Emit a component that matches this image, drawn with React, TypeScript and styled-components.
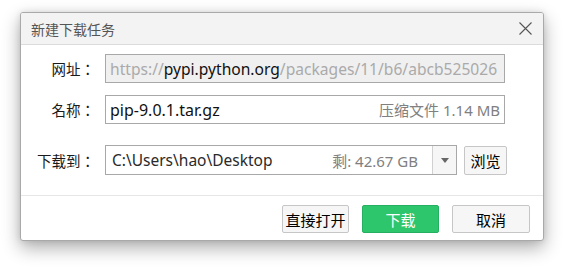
import React from "react";
import styled, { createGlobalStyle } from "styled-components";

const GlobalStyle = createGlobalStyle`
  html, body {
    margin: 0;
    padding: 0;
    background: #fff;
  }
  body {
    font-family: "Segoe UI", "Noto Sans", "Noto Sans CJK SC", sans-serif;
  }
`;

const Page = styled.div`
  width: 565px;
  height: 270px;
  padding: 12px 0 0 20px;
  box-sizing: border-box;
`;

const Dialog = styled.div`
  width: 524px;
  height: 229px;
  box-sizing: border-box;
  border: 1px solid #a9a9a9;
  border-radius: 3px;
  background: #fff;
  box-shadow: 0 7px 18px rgba(0, 0, 0, 0.32), 0 0 6px rgba(0, 0, 0, 0.1);
  display: flex;
  flex-direction: column;
  overflow: hidden;
`;

const TitleBar = styled.div`
  height: 31px;
  flex: none;
  background: #f3f3f3;
  border-bottom: 1px solid #dcdcdc;
  display: flex;
  align-items: center;
  justify-content: space-between;
  padding: 0 10px 0 10px;
`;

const Title = styled.span`
  font-family: "Noto Sans CJK SC", sans-serif;
  font-size: 14px;
  color: #555;
`;

const CloseButton = styled.button`
  width: 16px;
  height: 16px;
  padding: 0;
  border: none;
  background: none;
  display: flex;
  align-items: center;
  justify-content: center;
`;

const Body = styled.div`
  flex: none;
  display: grid;
  grid-template-columns: 76px 1fr;
  column-gap: 8px;
  align-items: center;
  padding: 9px 38px 20px 0;
  border-bottom: 1px solid #e6e6e6;
`;

const Label = styled.label<{ $top?: number }>`
  font-family: "Noto Sans CJK TC", "Noto Sans CJK SC", sans-serif;
  font-size: 14.5px;
  color: #1a1a1a;
  text-align: right;
  margin-top: ${(p) => p.$top ?? 0}px;
  padding-right: 2px;
`;

const Field = styled.div<{ $disabled?: boolean; $top?: number; $h?: number }>`
  height: ${(p) => p.$h ?? 29}px;
  box-sizing: border-box;
  border: 1px solid #a8a8a8;
  background: ${(p) => (p.$disabled ? "#f0f0f0" : "#fff")};
  display: flex;
  align-items: center;
  padding: 0 0 0 4px;
  margin-top: ${(p) => p.$top ?? 0}px;
  font-size: ${(p) => (p.$disabled ? 15.6 : 16)}px;
  white-space: nowrap;
  overflow: hidden;
`;

const Text = styled.span<{ $muted?: boolean }>`
  color: ${(p) => (p.$muted ? "#aaa" : "#111")};
`;

const Aside = styled.span`
  margin-left: auto;
  padding-right: 4px;
  color: #808080;
  font-size: 15px;
`;

const PathRow = styled.div`
  display: flex;
  align-items: center;
  gap: 7px;
  margin-top: 21px;
  margin-right: -2px;
`;

const PathField = styled(Field)`
  flex: 1;
  padding-right: 0;
  font-size: 15.5px;
  color: #2a2a2a;
  padding-left: 6px;
`;

const DropArrow = styled.div`
  width: 23px;
  align-self: stretch;
  border-left: 1px solid #d0d0d0;
  background: #f6f6f6;
  display: flex;
  align-items: center;
  justify-content: center;
  margin-left: 10px;
`;

const Button = styled.button<{ $primary?: boolean; $w?: number }>`
  height: 28px;
  width: ${(p) => p.$w ?? 78}px;
  box-sizing: border-box;
  border-radius: 2px;
  border: 1px solid ${(p) => (p.$primary ? "#24b060" : "#c6c6c6")};
  background: ${(p) => (p.$primary ? "#2ec66d" : "#f6f6f6")};
  color: ${(p) => (p.$primary ? "#fff" : "#000")};
  font-family: "Noto Sans CJK SC", sans-serif;
  font-size: 15px;
  padding: 0;
  display: flex;
  align-items: center;
  justify-content: center;
`;

const Footer = styled.div`
  flex: 1;
  display: flex;
  justify-content: flex-end;
  align-items: flex-start;
  gap: 13px;
  padding: 9px 13px 0 0;
`;

export default function App() {
  return (
    <Page>
      <GlobalStyle />
      <Dialog>
        <TitleBar>
          <Title>新建下载任务</Title>
          <CloseButton aria-label="关闭">
            <svg width="13" height="13" viewBox="0 0 13 13">
              <path d="M0.5 0.5 L12.5 12.5 M12.5 0.5 L0.5 12.5" stroke="#555" strokeWidth="1.1" />
            </svg>
          </CloseButton>
        </TitleBar>
        <Body>
          <Label>网址：</Label>
          <Field $disabled>
            <Text $muted>https://</Text>
            <Text>pypi.python.org</Text>
            <Text $muted>/packages/11/b6/abcb525026</Text>
          </Field>

          <Label $top={12}>名称：</Label>
          <Field $top={12} $h={29}>
            <Text>pip-9.0.1.tar.gz</Text>
            <Aside>压缩文件 1.14 MB</Aside>
          </Field>

          <Label $top={21}>下载到：</Label>
          <PathRow>
            <PathField $h={30}>
              <span>C:\Users\hao\Desktop</span>
              <Aside>剩: 42.67 GB</Aside>
              <DropArrow>
                <svg width="8" height="5" viewBox="0 0 8 5">
                  <path d="M0 0 H8 L4 5 Z" fill="#666" />
                </svg>
              </DropArrow>
            </PathField>
            <Button $w={43} style={{ height: 29 }}>浏览</Button>
          </PathRow>
        </Body>
        <Footer>
          <Button $w={67}>直接打开</Button>
          <Button $primary $w={77}>下载</Button>
          <Button $w={78}>取消</Button>
        </Footer>
      </Dialog>
    </Page>
  );
}
